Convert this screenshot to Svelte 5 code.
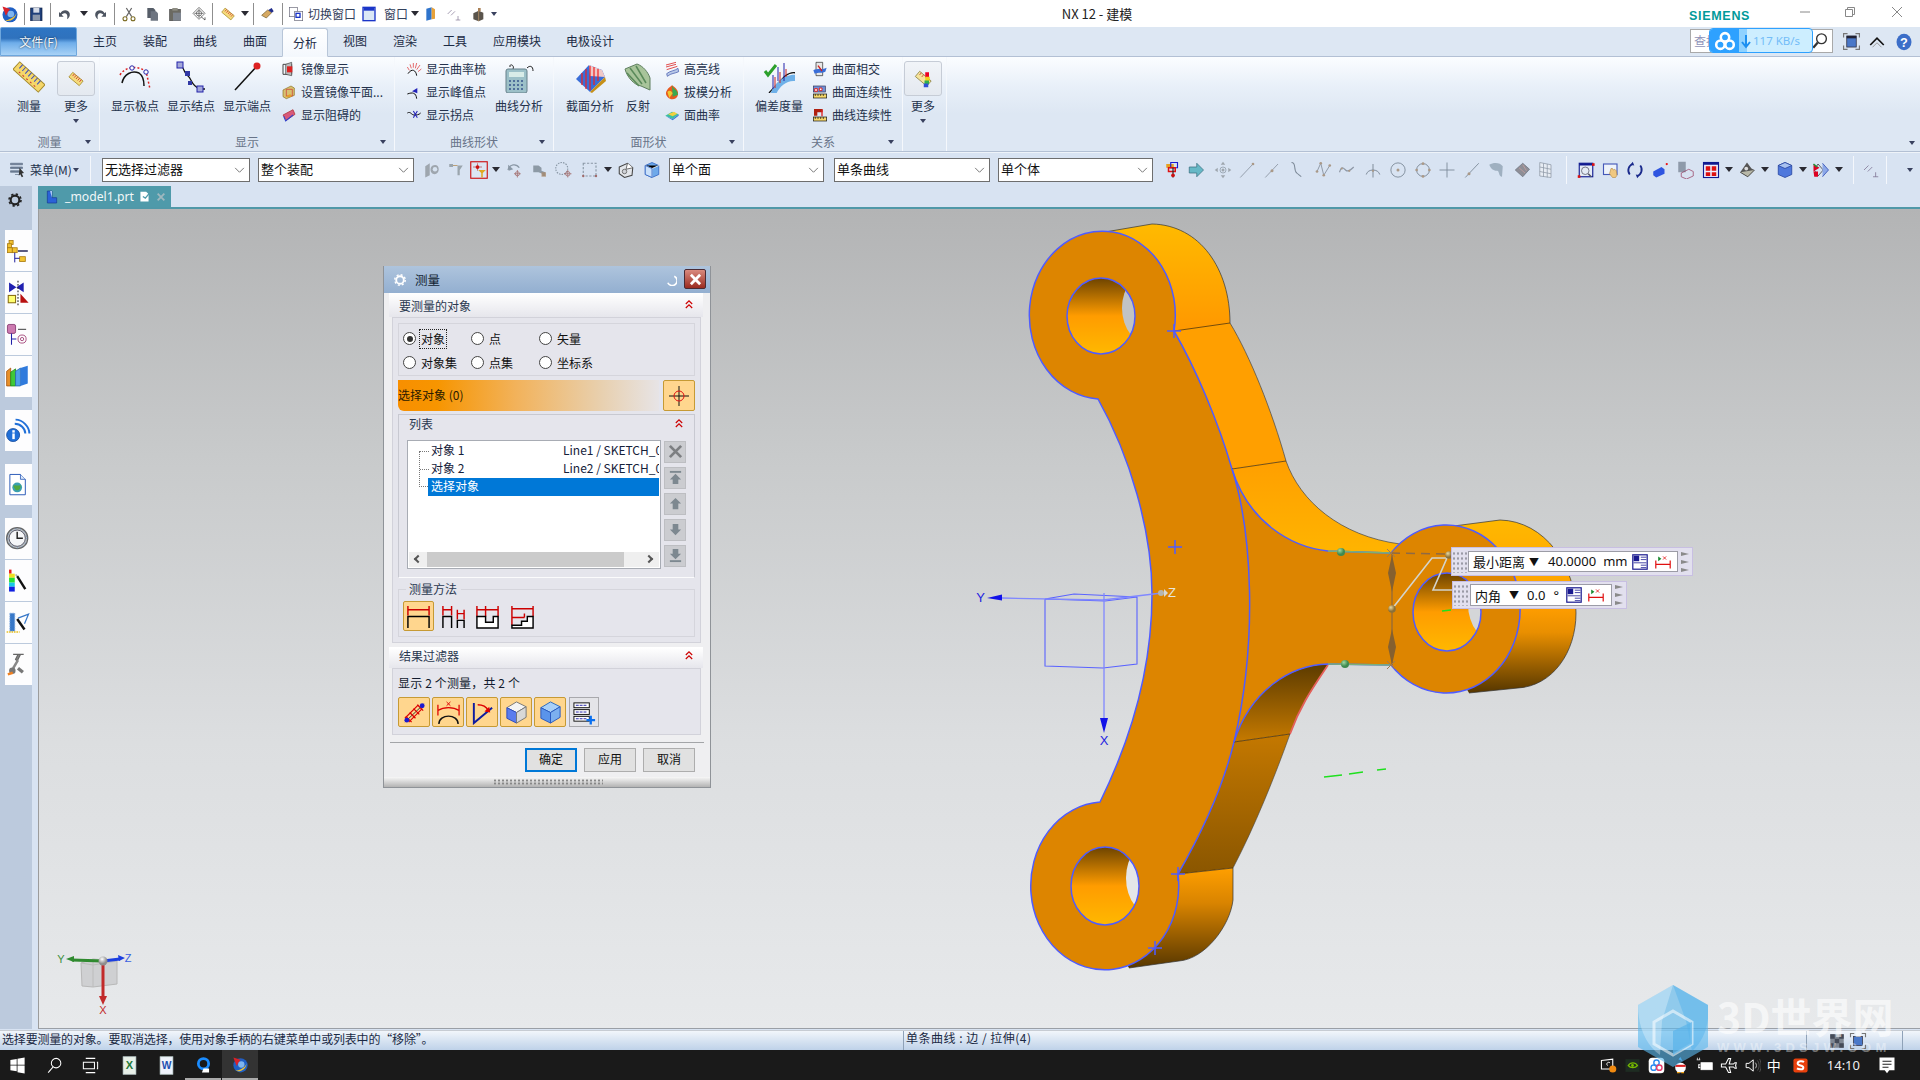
<script>
  const I = {
    logo:'<circle cx="12" cy="13" r="9" fill="#1f5fc4"/><path d="M6 20c6 2 13-2 14-10-1 4-5 8-14 10z" fill="#f2c230"/><path d="M3 3l9 3-5 8z" fill="#d8222a"/><circle cx="13" cy="12" r="4" fill="#7fb5ee"/>',
    save:'<rect x="4" y="3" width="17" height="19" fill="#1f3f7a" stroke="#0c1f44"/><rect x="8" y="3" width="9" height="7" fill="#d5dbe6"/><rect x="7" y="13" width="11" height="9" fill="#8a96aa"/>',
    undo:'<path d="M5 11c3-6 12-6 14 0 1 4-1 7-4 9 1-4 1-8-3-9-2 0-4 1-5 2l3 3H3V9z" fill="#4d5460"/>',
    redo:'<path d="M19 11c-3-6-12-6-14 0-1 4 1 7 4 9-1-4-1-8 3-9 2 0 4 1 5 2l-3 3h7V9z" fill="#4d5460"/>',
    cut:'<path d="M8 3l8 13M16 3L8 16" stroke="#666" stroke-width="1.8"/><circle cx="6" cy="19" r="3" fill="none" stroke="#7a6a20" stroke-width="1.6"/><circle cx="18" cy="19" r="3" fill="none" stroke="#7a6a20" stroke-width="1.6"/>',
    copy:'<path d="M5 3h9l3 3v12H5z" fill="#565d68"/><path d="M10 8h8l3 3v11H10z" fill="#6d7480"/>',
    paste:'<rect x="4" y="5" width="16" height="17" fill="#6b6a62" stroke="#444"/><rect x="8" y="3" width="8" height="4" fill="#8d8c82"/><rect x="9" y="10" width="12" height="12" fill="#7e858f"/>',
    target:'<path d="M12 2l9 9-9 9-9-9z" fill="none" stroke="#444"/><circle cx="12" cy="11" r="4" fill="none" stroke="#444"/><path d="M12 4v14M5 11h14" stroke="#444"/><path d="M15 16l6 5v-4" fill="#fff" stroke="#222"/>',
    rulerS:'<g transform="rotate(40 12 12)"><rect x="3" y="8" width="18" height="8" fill="#f5dc7b" stroke="#a58a2c"/><path d="M6 8v4M9 8v4M12 8v4M15 8v4M18 8v4" stroke="#c23"/></g>',
    brush:'<path d="M4 14l9-8 6 4-8 8z" fill="#d6a962" stroke="#6e5a2a"/><path d="M14 6l5-3 3 5-3 2z" fill="#222e8c"/>',
    swap:'<rect x="2" y="2" width="12" height="14" fill="none" stroke="#667"/><rect x="10" y="8" width="12" height="14" fill="#fff" stroke="#667"/><rect x="12" y="11" width="6" height="6" fill="none" stroke="#1a35c8" stroke-width="2"/>',
    win:'<rect x="3" y="2" width="18" height="20" fill="#dbe8f6" stroke="#1a35c8" stroke-width="2"/><rect x="4" y="3" width="16" height="4" fill="#1a35c8"/>',
    book:'<path d="M5 4l8-2v18l-8 2z" fill="#2f74cc"/><path d="M13 2l5 3v14l-5 1z" fill="#e8a23a"/>',
    para:'<path d="M4 12l6-6M9 14l6-6" stroke="#7b6f8f"/><path d="M16 21h7M19.500 15v6" stroke="#7b6f8f"/>',
    shell:'<path d="M5 11l8-4 7 3v10l-7 3-8-3z" fill="#5a544c"/><path d="M13 7v16" stroke="#c9a070"/><path d="M12 3h4v5h-4z" fill="#aa8055"/>',
    meas:'<g transform="rotate(42 16 16)"><rect x="-1" y="11" width="34" height="10" fill="#f5d76a" stroke="#a58a2c"/><path d="M3 11v5M7 11v5M11 11v5M15 11v5M19 11v5M23 11v5M27 11v5" stroke="#3a4fc0"/><path d="M5 19h24" stroke="#c33" stroke-dasharray="2 3"/></g>',
    pole:'<path d="M3 22C5 13 13 9 20 12c3 2 5 7 5 13" fill="none" stroke="#111" stroke-width="1.500"/><path d="M1 14C6 6 16 4 27 10l4 18" fill="none" stroke="#d22" stroke-width="1.500" stroke-dasharray="2 2"/><circle cx="13" cy="7" r="2.200" fill="#fff" stroke="#22a"/><circle cx="27" cy="11" r="2.200" fill="#fff" stroke="#22a"/>',
    node:'<path d="M5 4c5 3 4 9 8 11 4 3 3 10 12 13h5" fill="none" stroke="#111" stroke-width="1.300"/><rect x="2" y="1" width="6" height="6" fill="#a4a8d8" stroke="#22a"/><rect x="10" y="10" width="5" height="5" fill="#3138a5"/><rect x="13" y="20" width="4" height="4" fill="#3138a5"/><rect x="22" y="25" width="6" height="6" fill="#a4a8d8" stroke="#22a"/>',
    end:'<path d="M4 29L26 5" stroke="#111" stroke-width="1.500"/><circle cx="26" cy="5" r="3.500" fill="#d22"/>',
    mirror:'<path d="M3 5h13v15H3z" fill="none" stroke="#444" stroke-width="1.500"/><path d="M7 5l9-3v20l-9-2z" fill="#bbb" stroke="#444"/><rect x="9" y="8" width="8" height="9" fill="#d22"/>',
    plane:'<path d="M3 9l12-6 5 3v11L8 22l-5-3z" fill="#d8c070" stroke="#8a6f20"/><path d="M8 8h9v10H8z" fill="none" stroke="#c33"/><path d="M6 19l8-4 2 4" fill="#e8a020"/>',
    obstr:'<path d="M3 12l15-8 3 7-13 9z" fill="#d85a7a" stroke="#a22"/><path d="M4 14l3 7 11-9" fill="none" stroke="#34c" stroke-width="1.600"/>',
    comb:'<path d="M3 19c6-9 12-5 13 3" fill="none" stroke="#111" stroke-width="1.500"/><path d="M5 14L2 9M8 11L6 5M11 10V3M14 11l2-8M16 13l5-7M18 16l5-4" stroke="#d22"/>',
    peak:'<path d="M2 15c8-3 13-2 14 7" fill="none" stroke="#111" stroke-width="1.500"/><path d="M9 11l8-5v8z" fill="#2222b8"/>',
    infl:'<path d="M2 9c5-3 6 3 10 3s7 0 10-3" fill="none" stroke="#111" stroke-width="1.500"/><path d="M11 6l6 10M17 6L11 16" stroke="#2222b8" stroke-width="1.600"/>',
    calc:'<path d="M7 6C6 2 12 4 10 8" fill="none" stroke="#222"/><path d="M24 7c3-3 6-2 6 3" fill="none" stroke="#222"/><rect x="3" y="8" width="21" height="24" rx="2" fill="#9cc0c8" stroke="#66808a"/><rect x="6" y="11" width="15" height="5" fill="#d8ece8"/><path d="M6 20h15M6 24h15M6 28h15" stroke="#4f6f9a" stroke-width="2" stroke-dasharray="2 2"/>',
    section:'<path d="M2 18L15 4l13 5 3 7-15 15z" fill="#3a6ed8"/><path d="M15 4l13 5 3 7-15-1z" fill="#f0c8c8"/><path d="M8 12v12M12 8v20M16 5v24M20 6v18M24 8v12" stroke="#e22" stroke-width="1.200"/><path d="M16 31l15-15 1 4-14 12z" fill="#c69018"/>',
    reflect:'<path d="M3 8l12-5c6 2 11 8 13 14v12l-9-4C12 24 5 16 3 8z" fill="#a8c49a" stroke="#5f7f5f"/><path d="M8 7l12 16M14 5l10 17M5 12l12 13" stroke="#5a8a5a" stroke-width="1.500"/>',
    high:'<path d="M4 19c6-5 12-4 17-8l1 5c-6 3-11 2-17 7z" fill="#b8c8e8" stroke="#3a4fa8"/><path d="M3 6l15-4M3 9l15-4M4 13l16-5" stroke="#d33" stroke-width="1.300"/>',
    draft:'<path d="M12 2c6 4 10 8 9 14s-8 8-12 6-8-7-5-12 6-6 8-8z" fill="#e85a20"/><path d="M12 2c2 6 8 6 9 14l-8 3z" fill="#3aa850"/><path d="M5 12c3-3 6-2 8 2l-5 7z" fill="#f0c830"/>',
    surf:'<path d="M2 13l10-6 10 4-9 7z" fill="#3cc0a0"/><path d="M6 11l9-4 5 3-7 4z" fill="#f0d040"/><path d="M2 13l11 5 9-7 0 2-9 7z" fill="#3878d8"/>',
    dev:'<path d="M6 32L22 15c4-3 8-4 11-3" fill="none" stroke="#111" stroke-width="1.300"/><path d="M8 32c2-8 14-20 26-18l-2 6c-9-1-17 7-19 14z" fill="#6eb0e8"/><path d="M2 10l3 4 8-10" fill="none" stroke="#2ca02c" stroke-width="3"/><path d="M15 20V6M21 20V2M10 28V14" stroke="#22a"/><path d="M12 27V16M17 22V11M23 16V8" stroke="#c22"/>',
    inter:'<path d="M6 2h10v20H6z" fill="#e8e8e8" stroke="#222"/><path d="M2 14c6-4 12 0 20-4l-2 6c-6 3-10 0-16 3z" fill="#3a6ed8"/><path d="M9 7l6 8" stroke="#c22" stroke-width="2"/>',
    cont:'<rect x="2" y="3" width="18" height="9" fill="#6e8fd8" stroke="#335"/><path d="M4 7h4v4H4zM11 6h4v4h-4z" fill="#fff" stroke="#d22" stroke-width="1.500"/><rect x="2" y="15" width="20" height="6" fill="#f5d76a" stroke="#111"/><path d="M5 15v3M9 15v3M13 15v3M17 15v3" stroke="#111"/>',
    curvec:'<path d="M3 13V3h13v5H8v5z" fill="#b02010"/><path d="M15 4v10" stroke="#d22" stroke-width="2"/><rect x="2" y="15" width="20" height="6" fill="#f5d76a" stroke="#111"/><path d="M5 15v3M9 15v3M13 15v3M17 15v3" stroke="#111"/>',
    more2:'<g transform="rotate(40 12 12)"><rect x="2" y="7" width="20" height="9" fill="#f5e59b" stroke="#8a7f40"/><path d="M5 7v4M9 7v4" stroke="#c33"/></g><rect x="15" y="3" width="5" height="7" fill="#e02"/><rect x="15" y="9" width="6" height="6" fill="#f0d020"/><rect x="14" y="14" width="6" height="5" fill="#30b050"/><rect x="13" y="18" width="6" height="5" fill="#3050d8"/>',
    mnu:'<path d="M2 3h16v2H2zM2 8h16v2H2zM2 13h12v2H2zM8 18h6" stroke="#6a7a90" fill="#6a7a90"/><path d="M14 9l6 7-3 .5 2 4-2 1-2-4-2 2z" fill="#333"/>',
    g1:'<path d="M3 7l6-4v16l-6 3zM13 6c4-2 8 0 8 5s-4 8-8 6-4-9 0-11z" fill="#9ea6ae"/><circle cx="16" cy="11" r="3" fill="#d7e3f1"/>',
    g2:'<path d="M3 4h5v4H3zM14 6h7l-4 6v7h-3v-7z" fill="#9aa5ad"/><path d="M8 6h6" stroke="#b08a50"/>',
    g3:'<rect x="1" y="1" width="22" height="22" fill="#dce6f3" stroke="#c11" stroke-width="1.500"/><path d="M4 8h12M10 3v10" stroke="#b55"/><circle cx="10" cy="8" r="2.500" fill="#c11"/><path d="M11 12h10l-4 4v6h-2v-6z" fill="#e0a820"/>',
    g4:'<path d="M4 12C6 4 15 3 19 9" fill="none" stroke="#8a98a6" stroke-width="1.800"/><path d="M4 5l1 8 6-2" fill="#8a98a6"/><path d="M12 17h9M16.500 12v10" stroke="#a06a6a"/><circle cx="16.500" cy="17" r="2.800" fill="none" stroke="#a06a6a"/>',
    g5:'<path d="M3 6h7l4 3v4l5 2v5h-4v-3l-5-2H3z" fill="#8d9aa6"/><rect x="14" y="15" width="6" height="6" fill="#a86" opacity=".7"/>',
    g6:'<circle cx="9" cy="10" r="8" fill="none" stroke="#8a98a6" stroke-width="1.500" stroke-dasharray="2 1.500"/><path d="M12 17h10M17 12v10" stroke="#a06a6a"/><circle cx="17" cy="17" r="3" fill="none" stroke="#a06a6a"/>',
    g7:'<rect x="3" y="3" width="17" height="17" fill="none" stroke="#8a98a6" stroke-width="1.500" stroke-dasharray="3 2"/><circle cx="20" cy="20" r="1.600" fill="#a06a6a"/><circle cx="3" cy="20" r="1.600" fill="#a06a6a"/>',
    g8:'<path d="M3 8l11-5 7 6-1 10-10 3-7-5z" fill="#e3e6ea" stroke="#444" stroke-width="1.400"/><path d="M14 3l-2 8 9-2" fill="#fff" stroke="#444"/><circle cx="10" cy="14" r="3" fill="#d0d3d8" stroke="#555"/>',
    cube:'<path d="M12 2l9 4v12l-9 4-9-4V6z" fill="#6ea9ea" stroke="#2a5fc0"/><path d="M3 6l9 4 9-4M12 10v12" stroke="#fff"/><path d="M3 6l9 4v12l-9-4z" fill="#c9e0fa" stroke="#2a5fc0"/>',
    t1:'<path d="M3 4h10v5H3z" fill="#e6a020"/><path d="M9 2h9v7H9z" fill="none" stroke="#1a1ad0" stroke-width="1.500"/><path d="M6 9h9v5H6z" fill="none" stroke="#d11" stroke-width="2"/><path d="M12 9v13" stroke="#222" stroke-width="1.500"/><circle cx="12" cy="19" r="2.500" fill="#c11"/>',
    t2:'<path d="M3 8h10V3l9 9-9 9v-5H3z" fill="#66b8c6" stroke="#3c7080"/>',
    t3:'<circle cx="12" cy="12" r="4" fill="none" stroke="#8e9aa6"/><path d="M12 1l3 4H9zM12 23l3-4H9zM1 12l4-3v6zM23 12l-4-3v6z" fill="#9ea6ae"/><circle cx="12" cy="12" r="2" fill="#9ea6ae"/>',
    t4:'<path d="M3 22L20 4" stroke="#8e98a6" stroke-width="1.200"/><circle cx="20" cy="4" r="1.800" fill="#a98"/>',
    t5:'<path d="M3 22L20 4" stroke="#8e98a6" stroke-width="1.200"/><circle cx="12" cy="13" r="2" fill="#a98"/>',
    t6:'<path d="M6 2c7 0 2 10 7 14 2 2 4 3 6 5" fill="none" stroke="#7d8a98" stroke-width="1.400"/>',
    t7:'<path d="M4 14l5-11 4 16 8-13" fill="none" stroke="#8e98a6" stroke-width="1.300"/><circle cx="4" cy="14" r="1.800" fill="#a98"/><circle cx="9" cy="3" r="1.800" fill="#a98"/><circle cx="13" cy="19" r="1.800" fill="#a98"/><circle cx="21" cy="6" r="1.800" fill="#a98"/>',
    t8:'<path d="M2 15c3-9 5-6 8-3s6 1 11-4" fill="none" stroke="#8e98a6" stroke-width="1.500"/><circle cx="5" cy="10" r="1.500" fill="#a98"/><circle cx="15" cy="13" r="1.500" fill="#a98"/>',
    t9:'<path d="M3 18C5 10 19 10 21 18M12 4v18" fill="none" stroke="#7d8a98" stroke-width="1.300"/><circle cx="12" cy="13" r="1.500" fill="#a98"/>',
    t10:'<circle cx="12" cy="12" r="9.500" fill="none" stroke="#7d8a98" stroke-width="1.200"/><circle cx="12" cy="12" r="2" fill="#a98"/>',
    t11:'<circle cx="12" cy="12" r="8.500" fill="none" stroke="#7d8a98" stroke-width="1.300"/><circle cx="12" cy="3.500" r="1.800" fill="#a98"/><circle cx="12" cy="20.500" r="1.800" fill="#a98"/><circle cx="3.500" cy="12" r="1.800" fill="#a98"/><circle cx="20.500" cy="12" r="1.800" fill="#a98"/>',
    t12:'<path d="M12 2v20M2 12h20" stroke="#7d8a98" stroke-width="1.200"/>',
    t13:'<path d="M3 22L21 3" stroke="#7d8a98" stroke-width="1.200"/><circle cx="8" cy="17" r="2" fill="#a98"/>',
    t14:'<path d="M3 5c6-4 15-3 18 2l-1 14c-5 0-3-9-7-8-5 0-8-3-10-8z" fill="#9fb0c0"/>',
    t15:'<path d="M3 12L13 3l9 8-9 10z" fill="#8e8e96" stroke="#6d7480"/><path d="M8 9l8 7M13 5l5 8" stroke="#c8a0a0"/>',
    t16:'<path d="M5 2l15 3v17L5 20z" fill="#e7ecf3" stroke="#8e98a6"/><path d="M5 8l15 3M5 14l15 3M10 3v18M15 4v18" stroke="#8e98a6"/>',
    t17:'<rect x="3" y="3" width="18" height="18" fill="#e6ecf6" stroke="#111a90" stroke-width="1.500"/><rect x="3" y="3" width="18" height="3" fill="#111a90"/><circle cx="11" cy="13" r="5" fill="none" stroke="#556"/><path d="M15 17l4 4" stroke="#556" stroke-width="2"/><rect x="20" y="3" width="3.500" height="3.500" fill="#d11"/><rect x="1" y="19" width="3.500" height="3.500" fill="#d11"/>',
    t18:'<rect x="2" y="4" width="18" height="14" fill="#eef3fa" stroke="#4458b8" stroke-width="1.500"/><path d="M12 10l2 0 1 2 2-1 2 2 1 6-2 3h-4l-4-5z" fill="#f0c880" stroke="#a87a30" stroke-width=".7"/>',
    t19:'<path d="M5 18a9 9 0 0 1 4-14" fill="none" stroke="#1a2a8c" stroke-width="2.400"/><path d="M19 6a9 9 0 0 1-4 14" fill="none" stroke="#1a2a8c" stroke-width="2.400"/><path d="M9 1l2 5-5-1zM15 23l-2-5 5 1z" fill="#1a2a8c"/>',
    t20:'<path d="M3 14l11-6 4 3v6l-11 5-4-3z" fill="#2f55e0"/><circle cx="21" cy="4" r="1.500" fill="#e11"/>',
    t21:'<rect x="3" y="1" width="10" height="14" fill="#8e9aaa"/><path d="M7 16l10-5 6 3v6l-9 4-7-3z" fill="none" stroke="#946"/>',
    t22:'<rect x="2" y="2" width="20" height="20" fill="#eef" stroke="#111a90" stroke-width="1.500"/><rect x="2" y="2" width="20" height="3" fill="#111a90"/><rect x="5" y="7" width="6" height="6" fill="#d11"/><rect x="13" y="7" width="6" height="6" fill="#d11"/><rect x="5" y="15" width="6" height="5" fill="#d11"/><rect x="13" y="15" width="6" height="5" fill="#d11"/>',
    t23:'<path d="M3 15L12 2l6 8 4 2-9 9z" fill="#555"/><path d="M3 15l10 6 9-9" fill="#b8b8a8" stroke="#333"/><circle cx="11" cy="10" r="2.500" fill="#ddd"/>',
    t24:'<path d="M12 2l9 4v12l-9 4-9-4V6z" fill="#4f78dc" stroke="#223f9c"/><path d="M3 6l9 4 9-4-9-4z" fill="#a9c2f0" stroke="#223f9c"/>',
    t25:'<path d="M8 4l7 8-7 8-5-8z" fill="none" stroke="#333"/><path d="M14 3l8 9-8 9" fill="#8ca8e8" stroke="#2a46b0"/><path d="M2 4l8 5-8 5zM2 14h6v7H3z" fill="#d02"/><path d="M2 4l5 4" stroke="#1a9a3a" stroke-width="2"/>',
    gear:'<circle cx="12" cy="12" r="6.500" fill="none" stroke="#222" stroke-width="3.200"/><circle cx="12" cy="12" r="9" fill="none" stroke="#222" stroke-width="2.400" stroke-dasharray="3.500 3.570"/>',
    s1:'<rect x="5" y="3" width="5" height="5" fill="#f2c230" stroke="#a87a10"/><rect x="10" y="3" width="5" height="5" fill="#f2c230" stroke="#a87a10" transform="translate(-7 4)"/><rect x="3" y="12" width="6" height="6" fill="#f2c230" stroke="#a87a10"/><rect x="9" y="12" width="6" height="6" fill="#f2c230" stroke="#a87a10"/><rect x="18" y="23" width="7" height="6" fill="#f2c230" stroke="#a87a10"/><path d="M12 18v12M12 25h6M16 16h12" stroke="#1a1a9a" stroke-width="1.200"/><path d="M16 16h12" stroke="#111"/>',
    s2:'<path d="M5 3l9 6 9-6v12l-9-6-9 6z" fill="#2020b0"/><path d="M16 1v30" stroke="#222" stroke-dasharray="2 2" stroke-width="1.300"/><rect x="4" y="19" width="9" height="9" fill="#ffff70" stroke="#8a6f10" stroke-width="1.300"/><path d="M19 17v11h10z" fill="#b81010"/>',
    s3:'<rect x="3" y="3" width="10" height="11" rx="2" fill="#cc7ab0" stroke="#80306a"/><path d="M16 9h10" stroke="#111"/><path d="M8 14v14M8 21h6" stroke="#2020a8" stroke-width="1.300"/><circle cx="21" cy="21" r="5" fill="none" stroke="#99306a"/><circle cx="21" cy="21" r="2" fill="none" stroke="#99306a"/>',
    s4:'<path d="M2 9l5-4v22H2z" fill="#e8902a" stroke="#a85510"/><path d="M7 10l6-4v21H7z" fill="#40c838" stroke="#208a18"/><path d="M13 9l6-4v22h-6z" fill="#50a0e8" stroke="#2868b0"/><path d="M19 5l9-3v22l-9 3z" fill="#2f7adc"/>',
    s5:'<circle cx="10" cy="21" r="8" fill="#2170d8" stroke="#144a9c"/><rect x="9" y="19" width="3" height="7" fill="#fff"/><rect x="9" y="15" width="3" height="3" fill="#fff"/><path d="M12 7c7 0 13 6 13 12M13 2c9 0 17 9 17 17" fill="none" stroke="#2170d8" stroke-width="2.400"/>',
    s6:'<path d="M6 3h13l6 6v19H6z" fill="#fff" stroke="#2a5ab8" stroke-width="1.200"/><path d="M19 3v6h6" fill="#dce8f8" stroke="#2a5ab8"/><circle cx="15" cy="19" r="6" fill="#3a9fb0"/><path d="M10 17c3-2 5 1 9-1 1 4-2 8-6 6z" fill="#4fa840"/>',
    s7:'<circle cx="15" cy="15" r="13" fill="#b8bec4" stroke="#666" stroke-width="1.500"/><circle cx="15" cy="15" r="10" fill="#f5f6f8" stroke="#445"/><path d="M15 7v8h7" fill="none" stroke="#222" stroke-width="1.800"/><circle cx="15" cy="15" r="12" fill="none" stroke="#4a78b0" stroke-dasharray="1 5"/>',
    s8:'<rect x="5" y="2" width="3" height="5" fill="#e81818"/><rect x="5" y="7" width="7" height="5" fill="#f0e020"/><rect x="5" y="12" width="7" height="6" fill="#28e030"/><rect x="5" y="18" width="7" height="5" fill="#18c8e8"/><rect x="5" y="23" width="7" height="6" fill="#1020e0"/><path d="M15 10l10 16" stroke="#111" stroke-width="3"/><path d="M13 8l2 2" stroke="#aaa" stroke-width="2"/>',
    s9:'<path d="M6 4h6v22H6z" fill="#3878c8" stroke="#7ca8e0" stroke-dasharray="2 1"/><path d="M2 27h16" stroke="#e8c020" stroke-width="2" stroke-dasharray="2 1"/><path d="M16 10l13-5-5 12" fill="none" stroke="#3878c8" stroke-width="1.500"/><path d="M15 11l9 13" stroke="#111" stroke-width="3"/>',
    s10:'<path d="M10 3h13M16 3l-3 6 2 2 4-8" stroke="#666" stroke-width="1.500" fill="#888"/><path d="M16 10l-6 10" stroke="#888" stroke-width="3"/><circle cx="9" cy="23" r="4" fill="#777"/><path d="M16 20l6 5" stroke="#777" stroke-width="4"/><path d="M3 26l6-2 1 3-6 2z" fill="#f08020"/>'
  };
  const qa = [['logo',10,20],['sep',24],['save',36,16],['sep',50],['undo',65,16],['caret',84],['redo',100,16],['sep',114],['cut',129,16],['copy',152,16],['paste',175,16],['target',199,16],['sep',212],['rulerS',228,16],['caret',245],['sep',253],['brush',267,16],['sep',282],['swap',296,16],['txt',332,0,'切换窗口'],['win',369,16],['txt',396,0,'窗口'],['caret',415],['book',431,16],['para',453,16],['shell',478,16],['caret2',495]];
  const tb1 = [['g1',432],['g2',456],['g3',479],['caret',496],['g4',514],['g5',540],['g6',564],['g7',590],['caret',608],['g8',626],['cube',652]];
  const tb2 = [['t1',1173],['t2',1196],['t3',1223],['t4',1247],['t5',1272],['t6',1296],['t7',1323],['t8',1347],['t9',1373],['t10',1398],['t11',1423],['t12',1447],['t13',1472],['t14',1496],['t15',1522],['t16',1545],['sepw',1566],['t17',1586],['t18',1611],['t19',1635],['t20',1660],['t21',1685],['t22',1711],['caret',1729],['t23',1747],['caret',1765],['t24',1785],['caret',1803],['t25',1821],['caret',1839],['sepw',1853],['para',1870],['sepw',1886],['caret2',1911]];
  function flowIcons(list, start) {
    let x = start;
    return list.map(([k, c, w = 18, t]) => {
      const width = k === 'sep' || k === 'sepw' ? 1 : k === 'caret' || k === 'caret2' ? 8 : k === 'txt' ? 48 : w;
      const real = k === 'txt' && t.length === 2 ? 24 : width;
      const left = c - real / 2;
      const ml = left - x;
      x = left + real;
      return { k, ml, w: real, t };
    });
  }
  const qaItems = flowIcons(qa, 0);
  const tb1Items = flowIcons(tb1, 414);
  const tb2Items = flowIcons(tb2, 1153);
  const tabs = [['主页',50],['装配',50],['曲线',50],['曲面',50],['分析',50],['视图',50],['渲染',50],['工具',50],['应用模块',74],['电极设计',72]];
  const tiles = [['s1',0],['s2',0],['s3',0],['s4',0],['s5',13],['s6',13],['s7',13],['s8',0],['s9',0],['s10',0]];
</script>

{#snippet ico(k, cls)}
  <svg class={cls} viewBox="0 0 24 24" aria-hidden="true">{@html I[k]}</svg>
{/snippet}
{#snippet big(k, label, w)}
  <div class="big" class:w40={w === 40}>
    <svg class="bigi" viewBox="0 0 32 32" aria-hidden="true">{@html I[k]}</svg>
    <span>{label}</span>
  </div>
{/snippet}
{#snippet small(k, label)}
  <div class="small">
    {@render ico(k, 'smi')}
    <span>{label}</span>
  </div>
{/snippet}
{#snippet moreBtn(k)}
  <div class="more">
    <div class="morebox">{@render ico(k, 'morei')}</div>
    <span>更多</span>
    <i class="tri"></i>
  </div>
{/snippet}
{#snippet flow(items)}
  {#each items as it}
    {#if it.k === 'sep'}<i class="vsep" style="margin-left:{it.ml}px"></i>
    {:else if it.k === 'sepw'}<i class="vsepw" style="margin-left:{it.ml}px"></i>
    {:else if it.k === 'caret'}<i class="caret" style="margin-left:{it.ml}px"></i>
    {:else if it.k === 'caret2'}<i class="caret small2" style="margin-left:{it.ml}px"></i>
    {:else if it.k === 'txt'}<span class="qtxt" style="margin-left:{it.ml}px;width:{it.w}px">{it.t}</span>
    {:else}<svg class="fi" viewBox="0 0 24 24" style="margin-left:{it.ml}px;width:{it.w}px;height:{it.w}px" aria-hidden="true">{@html I[it.k]}</svg>
    {/if}
  {/each}
{/snippet}
{#snippet arrows()}
  <svg class="pa" viewBox="0 0 8 20"><path d="M0 0l8 2-8 2zM0 8l8 2-8 2zM0 16l8 2-8 2z" fill="#8a8a8a"/></svg>
{/snippet}
{#snippet popIcons()}
  <svg class="pi" viewBox="0 0 20 20"><rect x="1" y="1" width="18" height="18" fill="#fff" stroke="#1a1a90" stroke-width="1.500"/><path d="M2 2h7v7H2z" fill="#1a1a90"/><path d="M11 4h7M11 7h7M2 11h16M11 14h7M11 17h7" stroke="#1a1a90"/></svg>
  <svg class="pi" viewBox="0 0 20 20"><path d="M1 8v10M19 8v10M1 13h18" stroke="#e01010" stroke-width="1.500" fill="none"/><path d="M4 3l4 3-4 3z" fill="#1a8a30"/><path d="M10 3l4 4M14 3l-4 4" stroke="#e01010"/></svg>
{/snippet}

<div class="app">
  <header class="title">
    {@render flow(qaItems)}
    <span class="ttl">NX 12 - 建模</span>
    <span class="siemens">SIEMENS</span>
    <div class="wbtns">
      <svg viewBox="0 0 12 12"><path d="M1 6h10" stroke="#888"/></svg>
      <svg viewBox="0 0 12 12"><path d="M1.500 3.500h7v7h-7zM3.500 3.500v-2h7v7h-2" fill="none" stroke="#888"/></svg>
      <svg viewBox="0 0 12 12"><path d="M1 1l10 10M11 1L1 11" stroke="#888"/></svg>
    </div>
  </header>

  <nav class="tabs">
    <div class="file">文件(F)</div>
    {#each tabs as [t, w]}
      <div class="tab" class:on={t === '分析'} class:t74={w === 74} class:t72={w === 72}>{t}</div>
    {/each}
    <div class="findbox">
      <span class="find">查找</span>
      <svg class="lens" viewBox="0 0 24 24"><circle cx="14" cy="9" r="6.500" fill="#fff" stroke="#333" stroke-width="1.800"/><path d="M9 14l-6 7" stroke="#333" stroke-width="3"/></svg>
    </div>
    <div class="spacer"></div>
    <svg class="tabi fullsc" viewBox="0 0 24 24"><path d="M2 7V2h5M17 2h5v5M22 17v5h-5M7 22H2v-5" fill="none" stroke="#777" stroke-width="1.500"/><rect x="6" y="5" width="12" height="14" fill="#4a78c8" stroke="#334"/><rect x="6" y="5" width="12" height="3" fill="#223"/></svg>
    <svg class="tabi chev" viewBox="0 0 24 24"><path d="M3 16l9-9 9 9" fill="none" stroke="#111" stroke-width="2.200"/><path d="M6 19l6-6 6 6" fill="none" stroke="#999" stroke-width="1.300"/></svg>
    <svg class="tabi help" viewBox="0 0 24 24"><ellipse cx="12" cy="12" rx="10" ry="11" fill="#3c6ec8"/><text x="12" y="18" text-anchor="middle" font-size="17" font-weight="700" fill="#fff" font-family="Liberation Sans">?</text></svg>
    <div class="baidu">
      <div class="bdl"><svg viewBox="0 0 24 24"><circle cx="12" cy="8" r="4.600" fill="none" stroke="#fff" stroke-width="2.800"/><circle cx="7" cy="16" r="4.600" fill="none" stroke="#fff" stroke-width="2.800"/><circle cx="17" cy="16" r="4.600" fill="none" stroke="#fff" stroke-width="2.800"/></svg></div>
      <div class="bdm"><svg viewBox="0 0 10 16"><path d="M5 2v11M1 9l4 5 4-5" fill="none" stroke="#1b8ff0" stroke-width="2"/></svg></div>
      <span>117 KB/s</span>
    </div>
  </nav>

  <section class="ribbon">
    <div class="grp g-1">
      <div class="gc">{@render big('meas', '测量')}{@render moreBtn('rulerS')}</div>
      <div class="gl">测量<i class="tri gtri"></i></div>
    </div>
    <div class="grp g-2">
      <div class="gc">
        {@render big('pole', '显示极点')}{@render big('node', '显示结点')}{@render big('end', '显示端点')}
        <div class="slist">
          {@render small('mirror', '镜像显示')}{@render small('plane', '设置镜像平面...')}{@render small('obstr', '显示阻碍的')}
        </div>
      </div>
      <div class="gl">显示<i class="tri gtri"></i></div>
    </div>
    <div class="grp g-3">
      <div class="gc">
        <div class="slist">{@render small('comb', '显示曲率梳')}{@render small('peak', '显示峰值点')}{@render small('infl', '显示拐点')}</div>
        {@render big('calc', '曲线分析')}
      </div>
      <div class="gl">曲线形状<i class="tri gtri"></i></div>
    </div>
    <div class="grp g-4">
      <div class="gc">
        {@render big('section', '截面分析')}{@render big('reflect', '反射', 40)}
        <div class="slist">{@render small('high', '高亮线')}{@render small('draft', '拔模分析')}{@render small('surf', '面曲率')}</div>
      </div>
      <div class="gl">面形状<i class="tri gtri"></i></div>
    </div>
    <div class="grp g-5">
      <div class="gc">
        {@render big('dev', '偏差度量')}
        <div class="slist">{@render small('inter', '曲面相交')}{@render small('cont', '曲面连续性')}{@render small('curvec', '曲线连续性')}</div>
      </div>
      <div class="gl">关系<i class="tri gtri"></i></div>
    </div>
    <div class="grp g-6"><div class="gc">{@render moreBtn('more2')}</div></div>
    <i class="tri rtri"></i>
  </section>

  <section class="tool">
    <div class="menub">
      <svg class="mnu" viewBox="0 0 24 24">{@html I.mnu}</svg><span>菜单(M)</span><i class="caret small2"></i>
    </div>
    <i class="vsepw"></i>
    <div class="combo c1">无选择过滤器<svg viewBox="0 0 12 8"><path d="M1 1l5 5 5-5" fill="none" stroke="#666"/></svg></div>
    <div class="combo c2">整个装配<svg viewBox="0 0 12 8"><path d="M1 1l5 5 5-5" fill="none" stroke="#666"/></svg></div>
    {@render flow(tb1Items)}
    <div class="combo c3">单个面<svg viewBox="0 0 12 8"><path d="M1 1l5 5 5-5" fill="none" stroke="#666"/></svg></div>
    <div class="combo c4">单条曲线<svg viewBox="0 0 12 8"><path d="M1 1l5 5 5-5" fill="none" stroke="#666"/></svg></div>
    <div class="combo c5">单个体<svg viewBox="0 0 12 8"><path d="M1 1l5 5 5-5" fill="none" stroke="#666"/></svg></div>
    {@render flow(tb2Items)}
  </section>

  <main class="main">
    <aside class="rail">
      {@render ico('gear', 'gear')}
      {#each tiles as [k, m]}
        <div class="tile" class:gap={m > 0}><svg viewBox="0 0 32 32" aria-hidden="true">{@html I[k]}</svg></div>
      {/each}
    </aside>
    <div class="work">
      <div class="ptabs">
        <div class="ptab">
          <svg viewBox="0 0 24 24" class="pti"><path d="M5 3l7 0v10l7 0v8H5z" fill="#2a62d8" stroke="#153a90"/><path d="M9 3h3v10" fill="#a9c6f4"/></svg>
          <span>_model1.prt</span>
          <svg viewBox="0 0 16 16" class="ptm"><path d="M3 2h7l3 3v9H3z" fill="#fff"/><path d="M6 8l3 2 5-6" stroke="#4f9aaa" stroke-width="1.500" fill="none"/></svg>
          <svg viewBox="0 0 12 12" class="ptx"><path d="M2 2l8 8M10 2l-8 8" stroke="#9fb8bf" stroke-width="2.200"/></svg>
        </div>
      </div>
      <div class="view">
        <svg class="scene" viewBox="38 208 1882 819" aria-hidden="true">
          <defs>
            <linearGradient id="topB" x1="0" y1="0" x2="0" y2="1"><stop offset="0" stop-color="#ffba00"/><stop offset="1" stop-color="#ff9600"/></linearGradient>
            <linearGradient id="band3" x1="0" y1="0" x2="0" y2="1"><stop offset="0" stop-color="#ff9f00"/><stop offset="1" stop-color="#ffb400"/></linearGradient>
            <linearGradient id="rightB" x1="0" y1="0" x2="0" y2="1"><stop offset="0" stop-color="#ffb800"/><stop offset=".5" stop-color="#ff9e00"/><stop offset=".65" stop-color="#e98f00"/><stop offset="1" stop-color="#553600"/></linearGradient>
            <linearGradient id="inner" x1="0" y1="0" x2="0" y2="1"><stop offset="0" stop-color="#5c3b00"/><stop offset="1" stop-color="#c67a00"/></linearGradient>
            <linearGradient id="lower" x1="0" y1="0" x2="0" y2="1"><stop offset="0" stop-color="#c47800"/><stop offset="1" stop-color="#8a5600"/></linearGradient>
            <linearGradient id="botB" x1="0" y1="0" x2="0" y2="1"><stop offset="0" stop-color="#ff9f00"/><stop offset=".35" stop-color="#d98400"/><stop offset="1" stop-color="#573700"/></linearGradient>
            <linearGradient id="hole" x1="0" y1="0" x2="0" y2="1"><stop offset="0" stop-color="#6d4400"/><stop offset=".5" stop-color="#ff9c00"/><stop offset="1" stop-color="#ffb800"/></linearGradient>
            <clipPath id="h1"><ellipse cx="1101" cy="315" rx="34" ry="38"/></clipPath>
            <clipPath id="h2"><ellipse cx="1105" cy="885" rx="34" ry="39"/></clipPath>
            <clipPath id="h3"><ellipse cx="1447" cy="611" rx="34" ry="39"/></clipPath>
            <radialGradient id="ball" cx=".35" cy=".3"><stop offset="0" stop-color="#e8d8a0"/><stop offset="1" stop-color="#8a7038"/></radialGradient>
            <radialGradient id="gball" cx=".35" cy=".3"><stop offset="0" stop-color="#9fd89f"/><stop offset="1" stop-color="#3f8a4f"/></radialGradient>
            <radialGradient id="wball" cx=".4" cy=".3"><stop offset="0" stop-color="#fff"/><stop offset="1" stop-color="#8e8e8e"/></radialGradient>
          </defs>

          <path d="M1105 231L1152 223C1200 224 1230 268 1230 322L1174 335L1105 300Z" fill="url(#topB)"/>
          <path d="M1105 231L1152 223C1200 224 1230 268 1230 322" fill="none" stroke="#333" stroke-width=".7"/>
          <path d="M1174 330L1230 322C1250 355 1272 410 1286 460L1232 468C1218 420 1196 368 1174 330Z" fill="#ff9f00"/>
          <path d="M1230 322C1250 355 1272 410 1286 460" fill="none" stroke="#444" stroke-width=".7"/>
          <path d="M1232 468L1286 460C1300 500 1340 535 1400 543L1391 552L1328 550C1290 546 1248 520 1232 468Z" fill="url(#band3)"/>
          <path d="M1286 460C1300 500 1340 535 1400 543" fill="none" stroke="#444" stroke-width=".7"/>
          <path d="M1446 526L1500 519C1545 520 1576 565 1576 612C1576 652 1552 685 1518 687L1469 692L1440 640Z" fill="url(#rightB)"/>
          <path d="M1446 526L1500 519C1545 520 1576 565 1576 612C1576 652 1552 685 1518 687L1469 692" fill="none" stroke="#333" stroke-width=".7"/>
          <path d="M1234 741C1250 690 1290 664 1328 663C1312 690 1300 705 1290 733Z" fill="url(#inner)"/>
          <path d="M1234 741L1290 733C1275 775 1255 825 1233 867L1178 873C1200 835 1222 790 1234 741Z" fill="url(#lower)"/>
          <path d="M1290 733C1275 775 1255 825 1233 867" fill="none" stroke="#444" stroke-width=".6"/>
          <path d="M1178 873L1233 867L1233 899C1230 925 1205 958 1179 960L1129 967L1100 920Z" fill="url(#botB)"/>
          <path d="M1233 867L1233 899C1230 925 1205 958 1179 960L1129 967" fill="none" stroke="#333" stroke-width=".7"/>
          <path d="M1328 664C1312 688 1300 705 1290 733" fill="none" stroke="#e4605a" stroke-width="1.800"/>
          <path d="M1098 398C1130 455 1152 530 1152 593C1152 670 1130 740 1100 801A74 84 0 1 0 1178 873C1200 835 1222 790 1234 741C1250 690 1290 664 1328 663L1391 664A74 84 0 1 0 1391 552L1328 550C1290 546 1248 520 1232 468C1218 420 1196 368 1174 330A73 84 0 1 0 1098 398Z" fill="#dd8500" stroke="#4f5cff" stroke-width="1.500"/>
          <path d="M1174 330L1230 322M1232 468L1286 460M1234 741L1290 733M1178 873L1233 867" stroke="#3a2a10" stroke-width=".7"/>
          <path d="M1232 468C1252 530 1258 640 1234 741" fill="none" stroke="#4f5cff" stroke-width="1.500"/>
          <path d="M1328 663L1391 664M1328 550L1391 552" stroke="#7ab078" stroke-width="1.400"/>
          <ellipse cx="1101" cy="315" rx="34" ry="38" fill="url(#hole)"/>
          <ellipse cx="1152" cy="307" rx="30" ry="38" fill="#c1c3c4" clip-path="url(#h1)"/>
          <ellipse cx="1101" cy="315" rx="34" ry="38" fill="none" stroke="#4f5cff" stroke-width="1.500"/>
          <ellipse cx="1105" cy="885" rx="34" ry="39" fill="url(#hole)"/>
          <ellipse cx="1156" cy="877" rx="30" ry="39" fill="#e4e6e8" clip-path="url(#h2)"/>
          <ellipse cx="1105" cy="885" rx="34" ry="39" fill="none" stroke="#4f5cff" stroke-width="1.500"/>
          <ellipse cx="1447" cy="611" rx="34" ry="39" fill="url(#hole)"/>
          <ellipse cx="1498" cy="603" rx="30" ry="39" fill="#d4d6d8" clip-path="url(#h3)"/>
          <ellipse cx="1447" cy="611" rx="34" ry="39" fill="none" stroke="#4f5cff" stroke-width="1.500"/>
          <path d="M1167 330h14M1174 323v14M1168 546h14M1175 539v14M1171 873h14M1178 866v14M1148 947h14M1155 940v14" stroke="#4f5cff" stroke-width="1.500"/>
          <path d="M1442 610l9-1M1324 776l18-2M1349 773l14-2M1377 769l9-1" stroke="#1fe01f" stroke-width="1.400"/>
          <path d="M1391 552L1449 553" stroke="#8e6a44" stroke-width="1.500" stroke-dasharray="9 6"/>
          <path d="M1392 552V664" stroke="#9c6e30" stroke-width="1.500"/>
          <path d="M1392 554l4 18-4 19-4-19zM1392 628l4 18-4 18-4-18z" fill="#85602f"/>
          <path d="M1387 548l8 8M1395 548l-8 8M1387 660l8 8M1395 660l-8 8" stroke="#a07a50"/>
          <path d="M1392 608L1432 557H1447M1447 557L1433 589H1453" fill="none" stroke="#d4d4cc" stroke-width="1.600"/>
          <circle cx="1392" cy="608" r="3.800" fill="url(#ball)"/>
          <circle cx="1449" cy="554" r="3.800" fill="url(#ball)"/>
          <circle cx="1341" cy="551" r="4" fill="url(#gball)"/>
          <circle cx="1345" cy="663" r="4" fill="url(#gball)"/>
          <path d="M1045 598V665L1103 667L1137 663V596L1105 600L1045 598L1074 593L1137 596" fill="none" stroke="#5a63ff" stroke-width="1.100"/>
          <path d="M1002 597L1103 599L1162 592M1104 592V717" fill="none" stroke="#8088ff" stroke-width="1.300"/>
          <path d="M987 597l15-3.500v6zM1100 717h8l-4 15z" fill="#1212e8"/>
          <circle cx="1161" cy="592" r="3" fill="#b6b6b0"/>
          <path d="M1164 588l4 4-4 4z" fill="#d9d9d2"/>
          <text x="985" y="601" font-size="13" fill="#2424e0" font-family="Liberation Sans" text-anchor="end">Y</text>
          <text x="1168" y="596" font-size="13" fill="#e7e7dd" font-family="Liberation Sans">Z</text>
          <text x="1104" y="744" font-size="13" fill="#2424e0" font-family="Liberation Sans" text-anchor="middle">X</text>
          <path d="M81 962L82 985L93 986L117 983L117 960L93 958Z" fill="#cfd0d2" stroke="#b8b8b8"/>
          <path d="M93 958V986M81 962L93 964L117 960" fill="none" stroke="#bcbcbc"/>
          <path d="M103 960L72 959" stroke="#2f8a2f" stroke-width="3"/><path d="M66 958l8-3v6z" fill="#2f8a2f"/>
          <path d="M103 960L120 958" stroke="#1c3fe0" stroke-width="3"/><path d="M125 957l-7-3 1 6z" fill="#1c3fe0"/>
          <path d="M103 960V995" stroke="#c22a2a" stroke-width="3"/><path d="M103 1004l-4-9h8z" fill="#c22a2a"/>
          <circle cx="103" cy="960" r="4.500" fill="url(#wball)"/>
          <text x="61" y="962" font-size="11" fill="#3f8f3f" font-family="Liberation Sans" text-anchor="middle">Y</text>
          <text x="128" y="961" font-size="11" fill="#3a5fe0" font-family="Liberation Sans" text-anchor="middle">Z</text>
          <text x="103" y="1013" font-size="11" fill="#c22a2a" font-family="Liberation Sans" text-anchor="middle">X</text>
        </svg>
      </div>
    </div>
  </main>

  <footer class="status">
    <div class="st1">选择要测量的对象。要取消选择，使用对象手柄的右键菜单中或列表中的“移除”。</div>
    <div class="st2">单条曲线 : 边 / 拉伸(4)</div>
    <div class="st3">
      <svg viewBox="0 0 24 24" class="flag"><path d="M3 3h18v18H3z" fill="#7f8792"/><path d="M3 3h6v6H3zM15 3h6v6h-6zM9 9h6v6H9zM3 15h6v6H3zM15 15h6v6h-6z" fill="#444b58"/></svg>
      <svg viewBox="0 0 24 24" class="flag"><path d="M2 7V2h5M17 2h5v5M22 17v5h-5M7 22H2v-5" fill="none" stroke="#777" stroke-width="1.500"/><rect x="6" y="6" width="12" height="12" fill="#4a78c8" stroke="#334"/></svg>
    </div>
    <div class="st4"></div>
  </footer>

  <div class="task">
    <svg class="tk" viewBox="0 0 24 24"><path d="M3 5l8-1.200V11H3zM12 3.600L21 2v9h-9zM3 12h8v7.200L3 18zM12 12h9v10l-9-1.400z" fill="#fff"/></svg>
    <svg class="tk" viewBox="0 0 24 24"><circle cx="14" cy="9" r="6" fill="none" stroke="#fff" stroke-width="1.300"/><path d="M10 14L4 21" stroke="#fff" stroke-width="1.300"/></svg>
    <svg class="tk tv" viewBox="0 0 24 24"><path d="M6 3h12M6 21h12M3 8h14v8H3zM20 8h1v8h-1" fill="none" stroke="#fff" stroke-width="1.300"/></svg>
    <svg class="tk" viewBox="0 0 24 24"><rect x="4" y="1" width="16" height="22" fill="#e8f0e8" stroke="#cdd"/><text x="12" y="17" text-anchor="middle" font-size="14" font-weight="700" fill="#1f7a3a" font-family="Liberation Sans">X</text></svg>
    <svg class="tk" viewBox="0 0 24 24"><rect x="4" y="1" width="16" height="22" fill="#eef2fb" stroke="#cdd"/><text x="12" y="17" text-anchor="middle" font-size="13" font-weight="700" fill="#1e4fb0" font-family="Liberation Sans">W</text></svg>
    <div class="tkq"><svg class="tk" viewBox="0 0 24 24"><circle cx="12" cy="11" r="6.500" fill="none" stroke="#1a8cff" stroke-width="3.500"/><path d="M12 17h7v5h-9z" fill="#fff"/></svg></div>
    <div class="tkn"><svg class="tk" viewBox="0 0 24 24">{@html I.logo}</svg></div>
    <div class="spacer"></div>
    <svg class="tr" viewBox="0 0 24 24"><path d="M2 5l16-2v14H2z" fill="none" stroke="#fff" stroke-width="1.500"/><path d="M14 8c-4-2-6 3-3 4" fill="none" stroke="#fff" stroke-width="1.300"/><circle cx="18" cy="17" r="5" fill="#f18a10"/></svg>
    <svg class="tr" viewBox="0 0 24 24"><rect x="2" y="3" width="20" height="18" fill="#1e2c22"/><path d="M6 12c3-5 10-5 13 0-3 4-10 4-13 0z" fill="none" stroke="#76b900" stroke-width="1.800"/><circle cx="12" cy="12" r="2" fill="#76b900"/></svg>
    <svg class="tr" viewBox="0 0 24 24"><rect x="1" y="1" width="22" height="22" rx="5" fill="#fff"/><circle cx="12" cy="8" r="3.800" fill="none" stroke="#2a8cf0" stroke-width="2"/><circle cx="8" cy="15" r="3.800" fill="none" stroke="#2a8cf0" stroke-width="2"/><circle cx="16" cy="15" r="3.800" fill="none" stroke="#e83e6c" stroke-width="2"/></svg>
    <svg class="tr" viewBox="0 0 24 24"><ellipse cx="12" cy="8" rx="6.500" ry="7" fill="#111"/><ellipse cx="12" cy="15" rx="7.500" ry="7" fill="#fff"/><path d="M5 11h14v3H5z" fill="#d22"/><path d="M9 3l6 3-3-6z" fill="#3a8fd8"/><path d="M7 21h4v2H7zM13 21h4v2h-4z" fill="#f0a010"/></svg>
    <svg class="tr" viewBox="0 0 24 24"><rect x="7" y="8" width="16" height="10" fill="#fff" stroke="#fff"/><path d="M6 11H3M6 15H3M4 11v4" stroke="#fff" stroke-width="1.500" fill="none"/><path d="M1 4h5M2 1v3M5 1v3" stroke="#fff"/></svg>
    <svg class="tr" viewBox="0 0 24 24"><path d="M2 10h6l4-8h3l-2 8h6l2-2h2l-1 4 1 4h-2l-2-2h-6l2 8h-3l-4-8H2z" fill="none" stroke="#fff" stroke-width="1.500"/></svg>
    <svg class="tr" viewBox="0 0 24 24"><path d="M3 9h4l6-5v16l-6-5H3z" fill="none" stroke="#fff" stroke-width="1.400"/><path d="M16 8c2 2 2 6 0 8" fill="none" stroke="#fff"/><path d="M19 5c3 4 3 10 0 14M22 3c3 5 3 13 0 18" fill="none" stroke="#666"/></svg>
    <span class="ime">中</span>
    <svg class="tr so" viewBox="0 0 24 24"><rect x="2" y="2" width="20" height="20" rx="3" fill="#e8400c"/><path d="M17 7c-3-2-9-1-9 2 0 4 8 2 8 6 0 3-6 3-9 1" fill="none" stroke="#fff" stroke-width="2.800"/></svg>
    <span class="clock">14:10</span>
    <svg class="tr note" viewBox="0 0 24 24"><path d="M2 2h20v17h-7l-3 4-3-4H2z" fill="#fff"/><path d="M6 7h12M6 11h12M6 15h8" stroke="#222" stroke-width="1.400"/></svg>
  </div>

  <div class="dlg">
    <div class="dtitle">
      <svg viewBox="0 0 24 24" class="dgear">{@html I.gear.replaceAll('#222','#fff')}</svg>
      <span>测量</span>
      <svg viewBox="0 0 24 24" class="drst"><path d="M19 6a9 9 0 1 1-12 12" fill="none" stroke="#fff" stroke-width="3"/></svg>
      <div class="dclose"><svg viewBox="0 0 14 14"><path d="M2 2l10 10M12 2L2 12" stroke="#fff" stroke-width="3"/></svg></div>
    </div>
    <div class="shead">要测量的对象<svg class="dchev" viewBox="0 0 10 12"><path d="M1 6l4-4 4 4M1 11l4-4 4 4" fill="none" stroke="#c00" stroke-width="1.500"/></svg></div>
    <div class="panel p1">
      <div class="rbox">
        <label class="rad"><i class="dot on"></i><span class="focus">对象</span></label>
        <label class="rad"><i class="dot"></i><span>点</span></label>
        <label class="rad"><i class="dot"></i><span>矢量</span></label>
        <label class="rad"><i class="dot"></i><span>对象集</span></label>
        <label class="rad"><i class="dot"></i><span>点集</span></label>
        <label class="rad"><i class="dot"></i><span>坐标系</span></label>
      </div>
      <div class="selrow">
        <div class="selbar">选择对象 (0)</div>
        <div class="selbtn"><svg viewBox="0 0 20 20"><path d="M0 10h20M10 0v20" stroke="#111"/><circle cx="10" cy="10" r="5" fill="none" stroke="#e01010"/></svg></div>
      </div>
      <div class="lbox">
        <div class="lhead">列表<svg class="dchev lc" viewBox="0 0 10 12"><path d="M1 6l4-4 4 4M1 11l4-4 4 4" fill="none" stroke="#c00" stroke-width="1.500"/></svg></div>
        <div class="lrow">
          <div class="list">
            <i class="tree"></i>
            <div class="item"><span class="n">对象 1</span><span>Line1 / SKETCH_000</span></div>
            <div class="item"><span class="n">对象 2</span><span>Line2 / SKETCH_000</span></div>
            <div class="item sel"><span class="n">选择对象</span></div>
            <div class="spacer"></div>
            <div class="hs"><i class="sl"></i><i class="th"></i><i class="sr"></i></div>
          </div>
          <div class="side">
            <div class="sb"><svg viewBox="0 0 16 16"><path d="M2 2l12 12M14 2L2 14" stroke="#7d7f82" stroke-width="3"/></svg></div>
            <div class="sb"><svg viewBox="0 0 16 16"><path d="M2 2h12" stroke="#7d8890" stroke-width="2"/><path d="M8 4l6 6h-3v5H5v-5H2z" fill="#7d8890"/></svg></div>
            <div class="sb"><svg viewBox="0 0 16 16"><path d="M8 2l6 6h-3v6H5V8H2z" fill="#7d8890"/></svg></div>
            <div class="sb"><svg viewBox="0 0 16 16"><path d="M8 14l6-6h-3V2H5v6H2z" fill="#7d8890"/></svg></div>
            <div class="sb"><svg viewBox="0 0 16 16"><path d="M2 14h12" stroke="#7d8890" stroke-width="2"/><path d="M8 12l6-6h-3V1H5v5H2z" fill="#7d8890"/></svg></div>
          </div>
        </div>
      </div>
      <div class="mbox">
        <span class="legend">测量方法</span>
        <div class="mbtn on"><svg viewBox="0 0 26 26"><path d="M2 2v10M24 2v10M2 6h22" stroke="#c00" stroke-width="1.500" fill="none"/><path d="M2 25V13h22v12" stroke="#000" stroke-width="1.500" fill="none"/></svg></div>
        <div class="mbtn"><svg viewBox="0 0 26 26"><path d="M2 2v10M11 2v10M2 6h9M17 6v10M24 6v10M17 10h7" stroke="#c00" stroke-width="1.500" fill="none"/><path d="M2 25V13h9v12M17 25V17h7v8" stroke="#000" stroke-width="1.500" fill="none"/></svg></div>
        <div class="mbtn"><svg viewBox="0 0 26 26"><path d="M2 2v11M11 2v11M24 2v11M2 6h22" stroke="#c00" stroke-width="1.500" fill="none"/><path d="M2 25V13h9v6h8v-6h5v12z" stroke="#000" stroke-width="1.500" fill="#fff"/></svg></div>
        <div class="mbtn"><svg viewBox="0 0 26 26"><path d="M2 2v20M24 2v11M2 5h22M2 14h13M15 10v4" stroke="#c00" stroke-width="1.500" fill="none"/><path d="M2 25v-3h10v-4h6v-5h6v12z" stroke="#000" stroke-width="1.500" fill="#fff"/></svg></div>
      </div>
    </div>
    <div class="shead h2">结果过滤器<svg class="dchev" viewBox="0 0 10 12"><path d="M1 6l4-4 4 4M1 11l4-4 4 4" fill="none" stroke="#c00" stroke-width="1.500"/></svg></div>
    <div class="panel p2">
      <div class="rtxt">显示 2 个测量，共 2 个</div>
      <div class="rbtns">
        <div class="rb"><svg viewBox="0 0 26 26"><path d="M3 23L23 4" stroke="#333"/><path d="M4 17l6 6M8 13l6 6M12 9l6 6M16 5l6 6" stroke="#d00" stroke-width="1.300"/><path d="M3 19l14-14M7 23L21 9" stroke="#d00" stroke-width="1.200"/><circle cx="5" cy="21" r="2.500" fill="#1a1ad0"/><circle cx="21" cy="6" r="2.500" fill="#1a1ad0"/></svg></div>
        <div class="rb"><svg viewBox="0 0 26 26"><path d="M3 25C3 14 23 14 23 25" fill="none" stroke="#111" stroke-width="1.500"/><path d="M2 11C8 7 18 7 24 11M2 5v11M24 5v11" fill="none" stroke="#d00" stroke-width="1.300"/><path d="M11 2l4 4M15 2l-4 4" stroke="#d00"/></svg></div>
        <div class="rb"><svg viewBox="0 0 26 26"><path d="M4 3v21L23 8" fill="none" stroke="#0e1ca0" stroke-width="2"/><path d="M8 5c6 0 9 2 11 6" fill="none" stroke="#d00" stroke-width="1.500"/><path d="M21 13l-6-1 5-5z" fill="#d00"/></svg></div>
        <div class="rb"><svg viewBox="0 0 26 26"><path d="M3 8l10-6 10 5-10 6z" fill="#f4f4f4" stroke="#777"/><path d="M3 8l10 5v11L3 19z" fill="#5a7cee" stroke="#2a4ac0"/><path d="M13 13l10-6v11l-10 6z" fill="#d8d8d8" stroke="#777"/></svg></div>
        <div class="rb"><svg viewBox="0 0 26 26"><path d="M3 8l10-6 10 5-10 6z" fill="#a8d0f8" stroke="#2a6ac0"/><path d="M3 8l10 5v11L3 19z" fill="#5a94ea" stroke="#2a5ac0"/><path d="M13 13l10-6v11l-10 6z" fill="#7cb0f0" stroke="#2a5ac0"/></svg></div>
        <div class="rb plain"><svg viewBox="0 0 26 26"><rect x="2" y="3" width="16" height="5" fill="#fff" stroke="#111"/><rect x="2" y="10" width="16" height="5" fill="#fff" stroke="#111"/><rect x="2" y="17" width="16" height="5" fill="#fff" stroke="#111"/><path d="M4 5.500h12M4 12.500h12M4 19.500h12" stroke="#22a" stroke-dasharray="3 1"/><path d="M15 21h9M19.500 16.500v9" stroke="#0a70f0" stroke-width="2.400"/></svg></div>
      </div>
    </div>
    <div class="ddiv"></div>
    <div class="dbtns">
      <div class="btn def">确定</div><div class="btn">应用</div><div class="btn">取消</div>
    </div>
    <div class="grip"><i></i></div>
  </div>

  <div class="pop pop1">
    <i class="hdl"></i>
    <div class="pbox"><span class="pn">最小距离</span><span class="ptri">▼</span><span class="pv">40.0000</span><span class="pu">mm</span>{@render popIcons()}</div>
    {@render arrows()}
  </div>
  <div class="pop pop2">
    <i class="hdl"></i>
    <div class="pbox"><span class="pn">内角</span><span class="ptri">▼</span><span class="pv">0.0</span><span class="pu">°</span>{@render popIcons()}</div>
    {@render arrows()}
  </div>

  <div class="wm">
    <svg viewBox="0 0 70 82" class="wmi"><path d="M35 0l35 20v42L35 82 0 62V20z" fill="#5bb8ee" opacity=".62"/><path d="M35 0l35 20c2 18-4 36-16 46l-6-30z" fill="#3ea8ea" opacity=".35"/><path d="M35 0L0 20c0 22 8 40 22 50l2-34z" fill="#fff" opacity=".3"/><path d="M35 26l19 11v22L35 70 16 59V37z" fill="none" stroke="#fff" stroke-width="3" opacity=".55"/><path d="M35 46l19-9v22L35 70z" fill="#5ab4ea" opacity=".7"/></svg>
    <div class="wmt"><b>3D世界网</b><span>WWW.3DSJW.COM</span></div>
  </div>
</div>

<style>
  :global(body){margin:0;background:#d8e3f2}
  .app{position:relative;width:1920px;height:1080px;overflow:hidden;display:flex;flex-direction:column;font-family:"Noto Sans CJK SC","Noto Sans",sans-serif;font-size:12px;color:#1b2a44}
  .spacer{flex:1}
  svg{display:block;flex:none}
  i{display:block;flex:none}

  .title{height:27px;background:#fff;display:flex;align-items:center;position:relative;flex:none}
  .vsep{width:1px;height:22px;background:#8f8f8f}
  .vsepw{width:1px;height:28px;background:#f4f7fc}
  .caret{width:0;border:4px solid transparent;border-top:5px solid #2a2a32;border-bottom:0;box-sizing:content-box}
  .small2{border-top-color:#39415e;border-width:3px 3px 0;border-top-width:4px;margin-left:1px}
  .qtxt{font-size:12px;color:#33415c;white-space:nowrap}
  .ttl{position:absolute;left:1060px;width:74px;text-align:center;font-size:13px;color:#222;white-space:nowrap}
  .siemens{position:absolute;left:1689px;top:9px;font:bold 12.500px/14px "Liberation Sans",sans-serif;color:#019a9a;letter-spacing:.7px}
  .wbtns{position:absolute;right:0;top:6px;display:flex}
  .wbtns svg{width:12px;height:12px;margin:0 20px 0 14px}
  .wbtns svg:last-child{margin-right:17px}
  .wbtns svg:nth-child(2){margin:0 21px 0 13px}

  .tabs{height:29px;background:#dde7f3;display:flex;align-items:flex-end;position:relative;flex:none}
  .file{width:77px;height:29px;box-sizing:border-box;margin-right:3px;border:1px solid #6ea7dd;background:linear-gradient(#2e75c3 0,#2f72bd 38%,#6eadea 55%,#a8d2f6 100%);color:#f3f8fd;display:flex;align-items:center;justify-content:center;font-size:12px;border-radius:2px 2px 0 0;text-shadow:0 0 2px #123}
  .tab{width:50px;height:27px;text-align:center;line-height:24px;color:#1b2a44;box-sizing:border-box}
  .t74{width:74px}.t72{width:72px}
  .tab.on{background:linear-gradient(#fff,#f4f8fd);border:1px solid #b8c6d8;border-bottom:1px solid #f4f8fd;border-radius:3px 3px 0 0;height:29px;line-height:27px;margin-bottom:-1px;position:relative;z-index:2;width:46px;margin-left:2px;margin-right:2px}
  .findbox{position:absolute;left:1690px;top:2px;width:143px;height:24px;box-sizing:border-box;background:#fff;border:1px solid #a9a9a9}
  .find{position:absolute;left:3px;top:2px;color:#8f93b8;font-size:12px}
  .lens{position:absolute;right:3px;top:2px;width:18px;height:18px}
  .tabi{align-self:center;width:18px;height:18px}
  .fullsc{margin-right:7px;width:19px;height:19px}
  .chev{margin-right:9px}
  .help{margin-right:7px}
  .baidu{position:absolute;left:1709px;top:1px;width:104px;height:25px;border-radius:4px;background:#cdeeff;border:1px solid #2ea1ff;box-sizing:border-box;display:flex;align-items:center;overflow:hidden;color:#73bdf8;font:11.500px "Noto Sans",sans-serif}
  .bdl{width:29px;height:100%;background:#2ea1ff;display:flex;align-items:center;justify-content:center}
  .bdl svg{width:22px;height:22px}
  .bdm{width:8px;height:100%;background:#8fd2ff;display:flex;align-items:center;justify-content:center;margin-right:6px}
  .bdm svg{width:10px;height:16px;margin-left:5px}

  .ribbon{height:96px;box-sizing:border-box;border-top:1px solid #b3c0d4;border-bottom:1px solid #b3c0d4;background:linear-gradient(#fbfdff 0,#e9f0f9 30%,#dde7f3 60%);display:flex;position:relative;flex:none}
  .grp{display:flex;flex-direction:column;height:94px;position:relative;box-sizing:border-box;border-right:1px solid #f5f8fc}
  .gc{display:flex;height:75px;flex:none}
  .gl{height:19px;line-height:19px;text-align:center;color:#687488;position:relative}
  .gtri{position:absolute;right:8px;top:8px}
  .g-1{width:100px}.g-2{width:295px}.g-3{width:159px}.g-4{width:190px}.g-5{width:159px}.g-6{width:44px}
  .g-1 .gc{padding-left:1px}
  .g-2 .gc{padding-left:7px}
  .g-3 .gc{padding-left:11px}
  .g-4 .gc{padding-left:8px}
  .g-5 .gc{padding-left:7px}
  .g-6 .gc{padding-left:1px}
  .big{width:56px;display:flex;flex-direction:column;align-items:center;padding-top:4px;box-sizing:border-box;white-space:nowrap;color:#24324c}
  .w40{width:40px}
  .bigi{width:32px;height:32px;margin-bottom:3px}
  .big span{line-height:19px;height:19px}
  .slist{display:flex;flex-direction:column;margin-left:6px;white-space:nowrap}
  .g-3 .slist{width:85px;margin-left:0}
  .g-2 .slist{margin-left:6px}
  .g-4 .slist{margin-left:6px}
  .g-5 .slist{margin-left:5px}
  .small{height:23px;display:flex;align-items:center;color:#24324c}
  .smi{width:16px;height:16px;margin-right:4px}
  .more{width:38px;display:flex;flex-direction:column;align-items:center;margin-left:0;padding-top:4px;box-sizing:border-box}
  .morebox{width:38px;height:35px;box-sizing:border-box;border:1px solid #c6ccd6;border-radius:3px;background:linear-gradient(#f1f4f8,#e4e9f0);display:flex;align-items:center;justify-content:center;margin-bottom:1px}
  .morei{width:18px;height:18px}
  .more span{line-height:17px;color:#24324c}
  .tri{width:0;height:0;border:3px solid transparent;border-top:4px solid #39415e;border-bottom:0;margin-top:5px}
  .gtri{margin-top:0}
  .rtri{position:absolute;right:5px;top:84px;margin:0}

  .tool{height:34px;background:#d8e3f2;display:flex;align-items:center;flex:none;border-top:1px solid #eef3f9;box-sizing:border-box}
  .menub{width:90px;display:flex;align-items:center;padding-left:9px;box-sizing:border-box}
  .mnu{width:18px;height:18px;margin-right:3px}
  .menub span{color:#24324c}
  .combo{height:24px;box-sizing:border-box;background:#fff;border:1px solid #6e6e6e;font-size:13px;color:#111;display:flex;align-items:center;padding:0 0 2px 2px;position:relative}
  .combo svg{position:absolute;right:4px;top:8px;width:11px;height:7px}
  .c1{width:148px;margin-left:11px}.c2{width:156px;margin-left:8px}.c3{width:155px;margin-left:8px}.c4{width:156px;margin-left:10px}.c5{width:155px;margin-left:8px}
  .fi{flex:none}

  .main{flex:1;display:flex;min-height:0}
  .rail{width:32px;background:#bccadd;display:flex;flex-direction:column;align-items:center;flex:none;box-sizing:border-box;padding-top:6px;padding-left:1px}
  .gear{width:16px;height:16px;margin-bottom:22px;margin-right:3px}
  .tile{width:27px;height:41px;background:#fdfdfe;margin-bottom:1px;display:flex;align-items:center;justify-content:center;margin-left:3px}
  .tile svg{width:26px;height:26px}
  .tile.gap{margin-top:12px}
  .work{flex:1;display:flex;flex-direction:column;margin-left:6px;min-width:0}
  .ptabs{height:21px;flex:none;background:#d8e3f2;border-bottom:2px solid #5098a8;box-sizing:content-box}
  .ptab{width:133px;height:21px;background:#4f9aaa;display:flex;align-items:center;color:#f1f7f8;font-size:12.200px;padding-left:6px;box-sizing:border-box;font-family:"Noto Sans",sans-serif}
  .pti{width:16px;height:16px;margin-right:5px}
  .ptm{width:13px;height:13px;margin-left:4px}
  .ptx{width:10px;height:10px;margin-left:5px}
  .view{flex:1;position:relative;background:linear-gradient(#b3b4b5,#c8cacb 30%,#dcdee0 65%,#e7e9eb);border-left:1px solid #9c9c9c;border-bottom:1px solid #9a9fa6;min-height:0}
  .scene{position:absolute;left:-1px;top:0;width:1882px;height:819px}

  .status{height:21px;flex:none;background:linear-gradient(#f2f6fb,#d8e4f2 50%,#bfd2e9);border-top:1px solid #c7ccd3;border-bottom:1px solid #dfe6ee;display:flex;align-items:center;box-sizing:border-box;margin-top:1px;color:#1b2a44}
  .st1{width:903px;padding:0 0 5px 2px;box-sizing:border-box;white-space:nowrap;font-size:12px;letter-spacing:-.18px}
  .st2{width:903px;border-left:1px solid #8fa2b8;height:100%;padding-left:2px;box-sizing:border-box;line-height:14px;letter-spacing:.5px}
  .st3{width:96px;border-left:1px solid #8fa2b8;height:100%;display:flex;align-items:center;gap:3px;padding-left:21px;box-sizing:border-box}
  .flag{width:18px;height:18px}
  .st4{flex:1;border-left:1px solid #8fa2b8;height:100%}

  .task{height:30px;background:#1a1a1a;display:flex;align-items:center;flex:none;padding-left:8px;box-sizing:border-box;color:#fff;margin-top:-1px;position:relative}
  .tk{width:19px;height:19px;margin-right:18px}
  .tv{margin-left:-1px;margin-right:20px}
  .tkq{width:36px;height:30px;margin-left:-9px;margin-right:1px;display:flex;align-items:center;justify-content:center;border-bottom:2px solid #aaa;box-sizing:border-box}
  .tkq .tk,.tkn .tk{margin:0}
  .tkn{width:36px;height:30px;background:#333;display:flex;align-items:center;justify-content:center;border-bottom:2px solid #aaa;box-sizing:border-box}
  .tr{width:17px;height:17px;margin-right:7px}
  .ime{font-size:14px;margin:0 9px 0 -1px;width:16px}
  .so{margin-right:18px}
  .clock{font:13px "Noto Sans",sans-serif;margin-right:18px;color:#eee}
  .note{margin-right:24px;width:18px;height:18px}

  .dlg{position:absolute;left:383px;top:266px;width:328px;height:522px;background:#efeff1;border:1px solid #8f9398;border-width:0 1px 1px 1px;box-sizing:border-box;display:flex;flex-direction:column}
  .dtitle{height:27px;flex:none;background:linear-gradient(#aec4dd,#93afd0);display:flex;align-items:center;position:relative;padding-left:9px;box-sizing:border-box}
  .dgear{width:14px;height:14px;margin-right:8px}
  .dtitle span{font-size:12.500px;color:#111f33}
  .drst{position:absolute;right:33px;top:7px;width:13px;height:13px}
  .dclose{position:absolute;right:4px;top:3px;width:22px;height:20px;box-sizing:border-box;background:linear-gradient(#d98a7e,#9a2b20);border:1px solid #4a2b34;border-radius:2px;display:flex;align-items:center;justify-content:center}
  .dclose svg{width:13px;height:13px}
  .shead{height:24px;flex:none;margin:0 7px 0 5px;background:linear-gradient(#fff,#e6e6ec);padding-left:10px;line-height:26px;position:relative;color:#2a3850}
  .shead.h2{height:20px;line-height:16px;margin-top:4px;border-top:1px solid #fff}
  .dchev{position:absolute;right:10px;top:6px;width:8px;height:10px}
  .h2 .dchev{top:2px}
  .panel{margin:0 9px 0 8px;background:#e5e5ec;flex:none;box-sizing:border-box;border:1px solid #d2d2da;padding:5px 5px 0}
  .p1{height:326px}
  .p2{height:67px;padding-top:4px}
  .rbox{height:53px;box-sizing:border-box;border:1px solid #d5d5dc;display:grid;grid-template-columns:68px 68px 1fr;grid-auto-rows:23.500px;padding:3px 0 0 4px}
  .rad{display:flex;align-items:center;color:#111;gap:5px;font-size:12px}
  .dot{width:13px;height:13px;border-radius:50%;border:1px solid #444;background:#fff;box-sizing:border-box;position:relative}
  .dot.on::after{content:"";position:absolute;left:2.500px;top:2.500px;width:6px;height:6px;border-radius:50%;background:#333}
  .focus{outline:1px dotted #222;outline-offset:1px;line-height:16px}
  .selrow{display:flex;margin-top:4px;height:31px}
  .selbar{width:262px;background:linear-gradient(90deg,#f88f00 0,#f79500 15%,#f2b25a 45%,#e8d0af 78%,#e7e4e6 100%);border-radius:0 0 0 6px;line-height:30px;color:#2a1a00;font-size:12px}
  .selbtn{width:32px;margin-left:4px;background:#ffd68e;border:1px solid #c69a34;border-radius:2px;box-sizing:border-box;display:flex;align-items:center;justify-content:center}
  .selbtn svg{width:20px;height:20px}
  .lbox{margin-top:3px;height:164px;box-sizing:border-box;border:1px solid #c8c9d1;border-bottom:1px solid #fbfbfc;position:relative}
  .lhead{height:25px;line-height:18px;padding-left:10px;color:#2a3850;position:relative}
  .lc{right:11px;top:3px}
  .lrow{display:flex;padding-left:8px}
  .list{width:254px;height:129px;box-sizing:border-box;background:#fff;border:1px solid #a8acb4;display:flex;flex-direction:column;padding-top:1px;position:relative}
  .tree{position:absolute;left:11px;top:10px;width:9px;height:36px;border-left:1px dotted #777;border-bottom:1px dotted #777;box-sizing:border-box}
  .tree::before{content:"";position:absolute;left:0;top:0;width:9px;border-top:1px dotted #777}
  .tree::after{content:"";position:absolute;left:0;top:18px;width:9px;border-top:1px dotted #777}
  .item{height:18px;margin-left:20px;margin-right:1px;padding-left:3px;display:flex;line-height:16px;overflow:hidden;white-space:nowrap;color:#15213a;flex:none}
  .item .n{width:132px;flex:none}
  .sel{background:#0078d7;color:#fff}
  .sel .n{color:#fff}
  .hs{height:15px;margin:0 1px 1px;background:#efefef;display:flex;align-items:center;flex:none}
  .sl,.sr{width:18px;height:15px;position:relative}
  .sl::after,.sr::after{content:"";position:absolute;top:4px;left:6px;width:6px;height:6px;border-left:2px solid #555;border-bottom:2px solid #555;box-sizing:border-box;transform:rotate(45deg)}
  .sr::after{transform:rotate(225deg);left:5px}
  .th{width:197px;height:15px;background:#cbcbcb}
  .hs .sr{margin-left:auto}
  .side{margin-left:3px;display:flex;flex-direction:column;gap:4.500px;padding-top:1px}
  .sb{width:22px;height:21.500px;background:#cbccd0;border:1px solid #bdbec2;box-sizing:border-box;display:flex;align-items:center;justify-content:center}
  .sb svg{width:15px;height:15px}
  .mbox{margin-top:11px;height:48px;box-sizing:border-box;border:1px solid #d5d5dc;position:relative;display:flex;gap:3.500px;padding:11px 0 0 4px}
  .legend{position:absolute;left:7px;top:-9px;background:#e5e5ec;padding:0 4px 0 3px;color:#2a3850;line-height:16px}
  .mbtn{width:31px;height:30px;box-sizing:border-box;border:1px solid transparent;border-radius:2px;display:flex;align-items:center;justify-content:center}
  .mbtn.on{background:#ffd68e;border-color:#c69a34}
  .mbtn svg{width:25px;height:25px}
  .rtxt{line-height:17px;height:17px;color:#111a2e;margin-top:1px;letter-spacing:.15px}
  .rbtns{display:flex;gap:2px;margin-top:6px}
  .rb{width:32px;height:30px;box-sizing:border-box;background:#ffd68e;border:1px solid #c69a34;border-radius:2px;display:flex;align-items:center;justify-content:center}
  .rb svg{width:25px;height:25px}
  .plain{width:30px;background:#e4e4e8;border-color:#a9a9ad;border-radius:0;margin-left:1px}
  .ddiv{height:1px;background:#a3a5a8;margin:7px 6px 0 6px;flex:none}
  .dbtns{display:flex;gap:7px;justify-content:flex-end;margin:5px 15px 0 0;flex:none}
  .btn{width:52px;height:24px;box-sizing:border-box;background:#e1e1e1;border:1px solid #adadad;text-align:center;line-height:20px;color:#111}
  .def{border:2px solid #0078d7;line-height:18px}
  .grip{height:10px;margin-top:auto;background:linear-gradient(#f7f7f7,#b3b3b3);position:relative;flex:none}
  .grip i{position:absolute;left:109px;top:2px;width:110px;height:6px;background-image:radial-gradient(circle,#888 1px,transparent 1.200px);background-size:4px 3px}

  .pop{position:absolute;box-sizing:border-box;background:#e2e0ee;border:1px solid #c8bfe2;display:flex;align-items:center;font-family:"Noto Sans","Noto Sans CJK SC",sans-serif;font-size:13px;color:#111}
  .pop1{left:1451px;top:547px;width:242px;height:29px}
  .pop2{left:1452px;top:581px;width:175px;height:28px}
  .hdl{width:16px;height:22px;background-image:radial-gradient(circle,#9a9aa6 1px,transparent 1.300px);background-size:4px 5px}
  .pbox{height:21px;background:#fff;border:1px solid #9c9ca6;display:flex;align-items:center;box-sizing:border-box;position:relative;white-space:nowrap}
  .pop1 .pbox{width:210px;height:21px}
  .pop2 .pbox{width:142px;height:22px;margin-left:1px}
  .pn{margin-left:4px;font-family:"Noto Sans CJK SC",sans-serif;font-size:13px;color:#111;line-height:17px}
  .pv,.pu{line-height:17px}
  .ptri{font-size:10px;line-height:10px;margin:0 8px;color:#111}
  .pop1 .ptri{margin:0 9px 0 4px}
  .pop1 .pu{margin-left:7px}
  .pop2 .pu{margin-left:8px}
  .pi{width:16px;height:16px;margin-left:7px}
  .pop1 .pu + .pi{margin-left:5px}
  .pop2 .pi{margin-left:6px}
  .pop2 .pu + .pi{margin-left:7px}
  .pa{width:8px;height:20px;margin-left:3px}

  .wm{position:absolute;left:1638px;top:985px;display:flex;pointer-events:none}
  .wmi{width:70px;height:82px}
  .wmt{margin-left:9px;display:flex;flex-direction:column;color:rgba(255,255,255,.6)}
  .wmt b{font:bold 41px/42px "Noto Sans CJK SC","Noto Sans",sans-serif;margin-top:9px;letter-spacing:0}
  .wmt span{font:bold 13px/14px "Liberation Sans",sans-serif;letter-spacing:4.300px;margin-top:5px;color:rgba(255,255,255,.4);white-space:nowrap}
</style>
